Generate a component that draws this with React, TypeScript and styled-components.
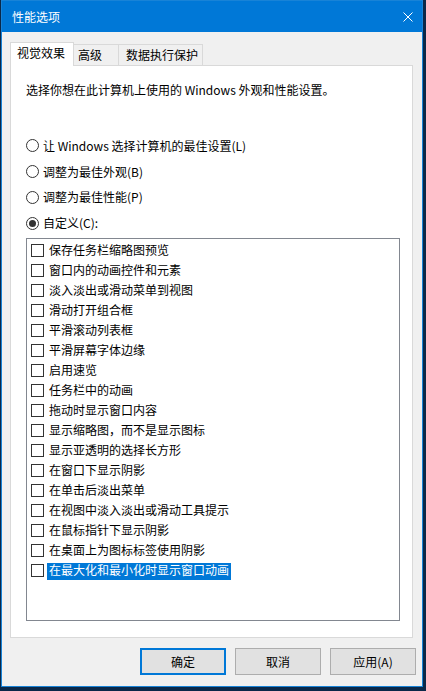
import React from "react";
import styled, { createGlobalStyle } from "styled-components";

const GlobalStyle = createGlobalStyle`
  html, body { margin: 0; padding: 0; background: #0a2849; }
  body {
    font-family: "Noto Sans CJK SC", "Noto Sans", sans-serif;
    font-size: 12px;
    color: #000;
  }
  * { box-sizing: border-box; }
`;

const Window = styled.div`
  margin-left: 1px;
  width: 422px;
  height: 687px;
  border: 1px solid #1883d7;
  background: #f0f0f0;
  display: flex;
  flex-direction: column;
`;

const TitleBar = styled.div`
  height: 31px;
  flex-shrink: 0;
  background: #0078d7;
  color: #fff;
  display: flex;
  align-items: center;
  justify-content: space-between;
  padding: 1px 9px 0 10px;
  font-size: 12px;
  line-height: 20px;
`;

const CloseButton = styled.span`
  display: flex;
  width: 10px;
  height: 10px;
`;

const Content = styled.div`
  flex: 1;
  display: flex;
  flex-direction: column;
  padding: 10px 9px 11px 8px;
`;

const TabRow = styled.div`
  display: flex;
  align-items: flex-end;
  height: 23px;
`;

const Tab = styled.div<{ $active?: boolean; $w: number; $pl: number }>`
  position: relative;
  z-index: ${(p) => (p.$active ? 2 : 1)};
  width: ${(p) => p.$w}px;
  height: ${(p) => (p.$active ? 24 : 21)}px;
  margin-bottom: ${(p) => (p.$active ? -1 : 0)}px;
  margin-left: -1px;
  &:first-child { margin-left: 0; }
  border: 1px solid #d9d9d9;
  border-bottom: none;
  background: ${(p) => (p.$active ? "#fff" : "#f0f0f0")};
  padding-left: ${(p) => p.$pl}px;
  line-height: 20px;
  white-space: nowrap;
`;

const Panel = styled.div`
  height: 573px;
  background: #fff;
  border: 1px solid #d9d9d9;
  padding: 14px 12px 0 15px;
  display: flex;
  flex-direction: column;
  overflow: hidden;
`;

const Description = styled.div`
  line-height: 20px;
  white-space: nowrap;
`;

const RadioGroup = styled.div`
  margin-top: 33px;
  display: flex;
  flex-direction: column;
`;

const RadioRow = styled.div`
  height: 25.75px;
  display: flex;
  align-items: center;
  gap: 4px;
  line-height: 20px;
  white-space: nowrap;
`;

const RadioCircle = styled.span<{ $checked?: boolean }>`
  width: 13px;
  height: 13px;
  flex-shrink: 0;
  border: 1px solid #333;
  border-radius: 50%;
  background: #fff;
  display: flex;
  align-items: center;
  justify-content: center;
  &::after {
    content: "";
    width: 7px;
    height: 7px;
    border-radius: 50%;
    background: #333;
    display: ${(p) => (p.$checked ? "block" : "none")};
  }
`;

const ListBox = styled.div`
  margin-top: 2px;
  height: 383px;
  flex-shrink: 0;
  border: 1px solid #828790;
  background: #fff;
  padding: 1px 0 0 4px;
`;

const ListItem = styled.div`
  height: 20px;
  display: flex;
  align-items: center;
`;

const CheckBox = styled.span`
  width: 13px;
  height: 13px;
  flex-shrink: 0;
  border: 1px solid #333;
  background: #fff;
`;

const ItemLabel = styled.span<{ $selected?: boolean }>`
  align-self: flex-start;
  margin-top: 3px;
  margin-left: 3px;
  height: 17px;
  padding: 0 2px;
  line-height: 14px;
  white-space: nowrap;
  background: ${(p) => (p.$selected ? "#0078d7" : "transparent")};
  color: ${(p) => (p.$selected ? "#fff" : "#000")};
`;

const ButtonRow = styled.div`
  display: flex;
  justify-content: flex-end;
  gap: 9px;
  margin: 10px -3px 0 0;
`;

const Button = styled.button<{ $default?: boolean }>`
  width: 86px;
  height: 27px;
  padding: 0;
  background: #e1e1e1;
  border: ${(p) => (p.$default ? "2px solid #0078d7" : "1px solid #adadad")};
  font-family: inherit;
  font-size: 12px;
  color: #000;
  line-height: 20px;
`;

const items = [
  "保存任务栏缩略图预览",
  "窗口内的动画控件和元素",
  "淡入淡出或滑动菜单到视图",
  "滑动打开组合框",
  "平滑滚动列表框",
  "平滑屏幕字体边缘",
  "启用速览",
  "任务栏中的动画",
  "拖动时显示窗口内容",
  "显示缩略图，而不是显示图标",
  "显示亚透明的选择长方形",
  "在窗口下显示阴影",
  "在单击后淡出菜单",
  "在视图中淡入淡出或滑动工具提示",
  "在鼠标指针下显示阴影",
  "在桌面上为图标标签使用阴影",
  "在最大化和最小化时显示窗口动画",
];

const radios = [
  { label: "让 Windows 选择计算机的最佳设置(L)", checked: false },
  { label: "调整为最佳外观(B)", checked: false },
  { label: "调整为最佳性能(P)", checked: false },
  { label: "自定义(C):", checked: true },
];

export default function App() {
  return (
    <>
      <GlobalStyle />
      <Window>
        <TitleBar>
          <span>性能选项</span>
          <CloseButton>
            <svg width="10" height="10" viewBox="0 0 10 10">
              <path d="M0.5 0.5 L9.5 9.5 M9.5 0.5 L0.5 9.5" stroke="#fff" strokeWidth="1" fill="none" />
            </svg>
          </CloseButton>
        </TitleBar>
        <Content>
          <TabRow>
            <Tab $active $w={64} $pl={6}>视觉效果</Tab>
            <Tab $w={46} $pl={4}>高级</Tab>
            <Tab $w={85} $pl={7}>数据执行保护</Tab>
          </TabRow>
          <Panel>
            <Description>选择你想在此计算机上使用的 Windows 外观和性能设置。</Description>
            <RadioGroup>
              {radios.map((r) => (
                <RadioRow key={r.label}>
                  <RadioCircle $checked={r.checked} />
                  <span>{r.label}</span>
                </RadioRow>
              ))}
            </RadioGroup>
            <ListBox>
              {items.map((it, i) => (
                <ListItem key={it}>
                  <CheckBox />
                  <ItemLabel $selected={i === items.length - 1}>{it}</ItemLabel>
                </ListItem>
              ))}
            </ListBox>
          </Panel>
          <ButtonRow>
            <Button $default>确定</Button>
            <Button>取消</Button>
            <Button>应用(A)</Button>
          </ButtonRow>
        </Content>
      </Window>
    </>
  );
}
